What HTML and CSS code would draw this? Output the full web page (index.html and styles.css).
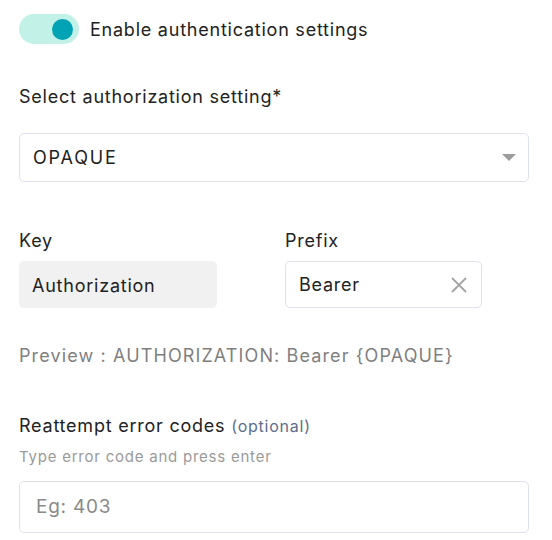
FILE: index.html
```html
<!DOCTYPE html>
<html>
<head>
<meta charset="utf-8">
<link rel="stylesheet" href="styles.css">
</head>
<body>
<div class="page">
  <div class="toggle-row">
    <span class="switch"><span class="knob"></span></span>
    <span class="toggle-label">Enable authentication settings</span>
  </div>

  <div class="field-label select-label">Select authorization setting*</div>
  <div class="select">
    <span class="select-value">OPAQUE</span>
    <span class="caret"></span>
  </div>

  <div class="pair">
    <div class="col">
      <div class="field-label">Key</div>
      <div class="box box-disabled">Authorization</div>
    </div>
    <div class="col">
      <div class="field-label">Prefix</div>
      <div class="box box-input">
        <span>Bearer</span>
        <svg class="clear" width="16" height="16" viewBox="0 0 16 16"><path d="M1 1 L15 15 M15 1 L1 15" stroke="#a3a3a3" stroke-width="1.8" fill="none"/></svg>
      </div>
    </div>
  </div>

  <div class="preview">Preview : AUTHORIZATION: Bearer {OPAQUE}</div>

  <div class="field-label retry-label">Reattempt error codes <span class="optional">(optional)</span></div>
  <div class="hint">Type error code and press enter</div>
  <div class="codes-input"><span class="placeholder">Eg: 403</span></div>
</div>
</body>
</html>
```

FILE: styles.css
```css
* { box-sizing: border-box; }
body {
  margin: 0;
  background: #ffffff;
  font-family: Inter, "Noto Sans", sans-serif;
  font-weight: 370;
  letter-spacing: 0.048em;
  color: #222222;
}
.page {
  padding: 14px 23px 0 19px;
  width: 552px;
}
.toggle-row {
  display: flex;
  align-items: center;
  gap: 11px;
  height: 30px;
}
.switch {
  width: 60px;
  height: 30px;
  border-radius: 15px;
  background: #c2f1e8;
  display: flex;
  align-items: center;
  justify-content: flex-end;
  padding-right: 6px;
}
.knob {
  width: 21px;
  height: 21px;
  border-radius: 50%;
  background: #00a3b3;
}
.toggle-label {
  font-size: 18px;
  line-height: 25px;
}
.field-label {
  font-size: 18px;
  line-height: 25px;
}
.select-label {
  margin-top: 40px;
}
.select {
  margin-top: 24px;
  height: 49px;
  border: 1px solid #dfe2ee;
  border-radius: 5px;
  display: flex;
  align-items: center;
  justify-content: space-between;
  padding: 0 12px 0 13px;
  font-size: 18px;
}
.select-value {
  letter-spacing: 0.1em;
}
.caret {
  width: 0;
  height: 0;
  border-left: 7px solid transparent;
  border-right: 7px solid transparent;
  border-top: 7px solid #9c9c9c;
}
.pair {
  margin-top: 46px;
  display: flex;
  gap: 68px;
}
.col {
  width: 198px;
  display: flex;
  flex-direction: column;
  gap: 8px;
}
.col + .col { width: 197px; }
.box {
  height: 47px;
  border-radius: 5px;
  display: flex;
  align-items: center;
  font-size: 18px;
  padding: 0 13px;
}
.box-disabled {
  background: #f1f1f1;
  padding-top: 2px;
}
.box-input {
  border: 1px solid #dfe2ee;
  justify-content: space-between;
  padding-right: 14px;
}
.clear { display: block; }
.preview {
  margin-top: 35px;
  font-size: 18px;
  line-height: 25px;
  letter-spacing: 0.062em;
  color: #7f7f7f;
}
.retry-label {
  margin-top: 45px;
}
.optional {
  font-size: 16px;
  color: #5d6d8d;
}
.hint {
  margin-top: 7px;
  font-size: 15px;
  line-height: 21px;
  color: #9a9a9a;
}
.codes-input {
  margin-top: 14px;
  height: 52px;
  border: 1px solid #dfe2ee;
  border-radius: 5px;
  display: flex;
  align-items: center;
  padding: 0 16px 1px;
  font-size: 19px;
}
.placeholder {
  color: #8a8a8a;
}
```
